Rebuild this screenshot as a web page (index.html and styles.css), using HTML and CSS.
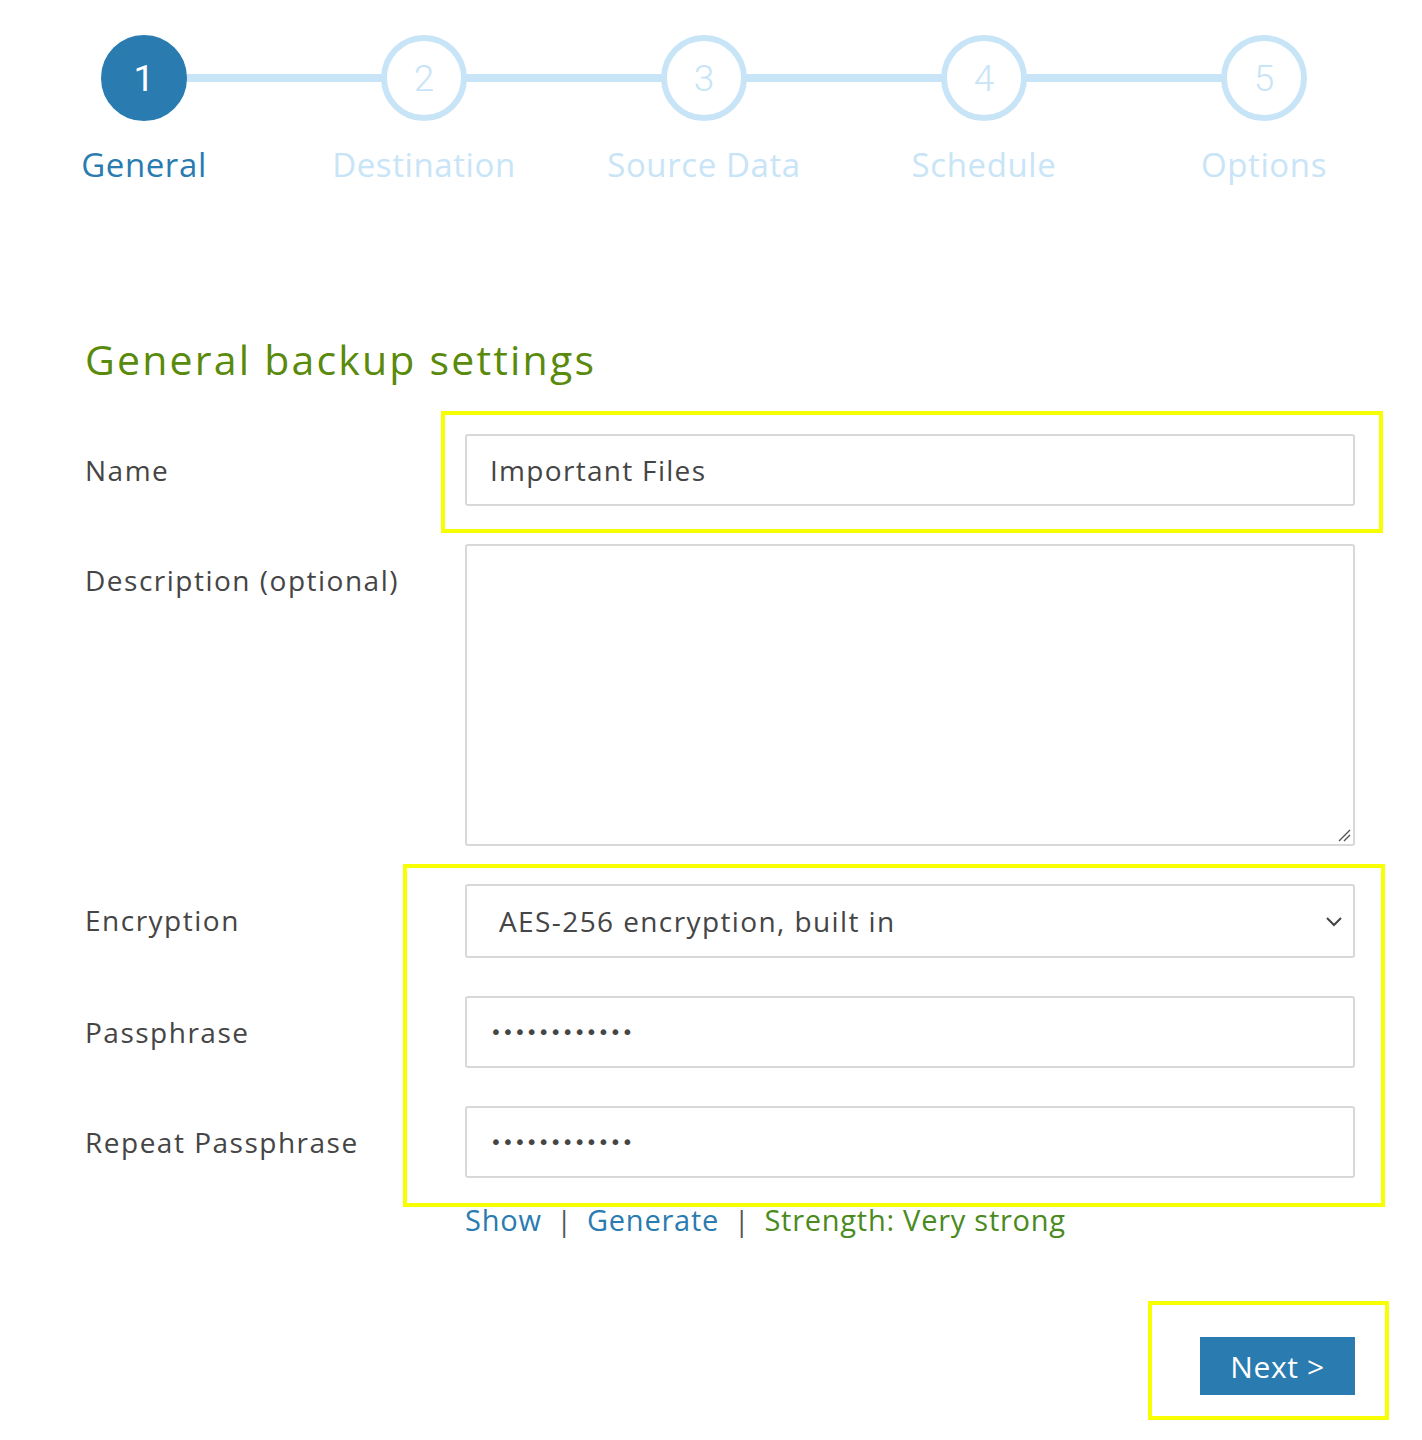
FILE: index.html
```html
<!DOCTYPE html>
<html lang="en">
<head>
<meta charset="utf-8">
<title>Add backup - General</title>
<link rel="stylesheet" href="styles.css">
</head>
<body>
<div class="page">
  <ol class="steps">
    <li class="step active"><span class="circle">1</span><span class="step-label">General</span></li>
    <li class="step"><span class="circle">2</span><span class="step-label">Destination</span></li>
    <li class="step"><span class="circle">3</span><span class="step-label">Source Data</span></li>
    <li class="step"><span class="circle">4</span><span class="step-label">Schedule</span></li>
    <li class="step last"><span class="circle">5</span><span class="step-label">Options</span></li>
  </ol>

  <main class="content">
    <h1 class="title">General backup settings</h1>

    <div class="form">
      <div class="row">
        <label class="label">Name</label>
        <div class="field"><div class="input">Important Files</div></div>
      </div>
      <div class="row">
        <label class="label">Description (optional)</label>
        <div class="field">
          <div class="input textarea">
            <svg class="grip" width="16" height="16" viewBox="0 0 16 16"><path d="M15 4 L4 15 M15 9 L9 15" stroke="#555" stroke-width="1.4" fill="none"/></svg>
          </div>
        </div>
      </div>
      <div class="row">
        <label class="label">Encryption</label>
        <div class="field">
          <div class="input select">
            <span>AES-256 encryption, built in</span>
            <svg class="chev" width="18" height="12" viewBox="0 0 18 12"><path d="M2 3 L9 10 L16 3" stroke="#444" stroke-width="2" fill="none"/></svg>
          </div>
        </div>
      </div>
      <div class="row">
        <label class="label">Passphrase</label>
        <div class="field"><div class="input pass">••••••••••••</div></div>
      </div>
      <div class="row">
        <label class="label">Repeat Passphrase</label>
        <div class="field"><div class="input pass">••••••••••••</div></div>
      </div>
      <div class="row links-row">
        <span></span>
        <div class="links">
          <a class="link">Show</a><span class="sep">|</span><a class="link">Generate</a><span class="sep">|</span><span class="strength">Strength: Very strong</span>
        </div>
      </div>
    </div>

    <div class="actions">
      <button class="next">Next &gt;</button>
    </div>
  </main>

  <div class="mark mark-name"></div>
  <div class="mark mark-enc"></div>
  <div class="mark mark-next"></div>
</div>
</body>
</html>
```

FILE: styles.css
```css
* { box-sizing: border-box; }
html, body { margin: 0; padding: 0; background: #fff; }
body {
  font-family: "Open Sans", "Noto Sans", "Liberation Sans", sans-serif;
  color: #444;
  width: 1422px;
  min-height: 1440px;
}
.page { position: relative; width: 1422px; min-height: 1440px; }

/* Stepper */
.steps {
  list-style: none;
  margin: 0;
  padding: 35px 0 0 4px;
  display: flex;
}
.step {
  position: relative;
  width: 280px;
  display: flex;
  flex-direction: column;
  align-items: center;
}
.step::after {
  content: "";
  position: absolute;
  left: 50%;
  width: 280px;
  top: 39px;
  height: 8px;
  background: #c8e4f7;
  z-index: 0;
}
.step.last::after { display: none; }
.circle {
  position: relative;
  z-index: 1;
  width: 86px;
  height: 86px;
  border-radius: 50%;
  border: 6px solid #c8e4f7;
  background: #fff;
  color: #c8e4f7;
  font-family: Roboto, "Open Sans", sans-serif;
  font-weight: 300;
  font-size: 37px;
  display: flex;
  align-items: center;
  justify-content: center;
}
.step.active .circle {
  background: #2a7bb0;
  border-color: #2a7bb0;
  color: #fff;
  font-weight: 400;
}
.step-label {
  margin-top: 24px;
  font-size: 33px;
  line-height: 40px;
  letter-spacing: 0.6px;
  color: #c8e4f7;
  white-space: nowrap;
}
.step.active .step-label { color: #2a7bb0; }

/* Content */
.content {
  padding: 0 0 0 85px;
  width: 1355px;
}
.title {
  margin: 150px 0 51px;
  font-weight: 400;
  font-size: 41px;
  line-height: 48px;
  letter-spacing: 2.2px;
  color: #5a8a0c;
}
.form {
  display: flex;
  flex-direction: column;
  gap: 38px;
}
.row {
  display: grid;
  grid-template-columns: 380px 890px;
  align-items: start;
}
.label {
  font-size: 28px;
  line-height: 72px;
  letter-spacing: 1.5px;
  color: #454545;
}
.input {
  position: relative;
  height: 72px;
  border: 2px solid #d8d8d8;
  border-radius: 3px;
  background: #fff;
  font-size: 28px;
  line-height: 68px;
  letter-spacing: 1.3px;
  padding: 0 23px;
  color: #454545;
}
.textarea { height: 302px; }
.grip { position: absolute; right: 2px; bottom: 2px; }
.select {
  height: 74px;
  line-height: 70px;
  letter-spacing: 1.4px;
  padding: 0 32px;
  display: flex;
  justify-content: space-between;
  align-items: center;
}
.chev { margin-right: -22px; }
.pass {
  font-family: "DejaVu Sans", sans-serif;
  font-size: 20px;
  letter-spacing: 0.15px;
  padding-left: 23px;
}
.links-row { margin-top: -14px; }
.links {
  font-size: 29px;
  line-height: 36px;
  letter-spacing: 0.75px;
  white-space: nowrap;
}
.link { color: #2a7bb0; }
.sep { color: #555; margin: 0 15px; font-size: 28px; letter-spacing: 0; }
.strength { color: #4a8a1e; }

.actions {
  display: flex;
  justify-content: flex-end;
  margin-top: 99px;
}
.next {
  width: 155px;
  height: 58px;
  border: 0;
  border-radius: 0;
  background: #2a7bb0;
  color: #fff;
  font-family: inherit;
  font-size: 30px;
  letter-spacing: 0.6px;
  padding: 0;
}

/* Annotation highlight boxes */
.mark {
  position: absolute;
  border: 4px solid #f7ff00;
  pointer-events: none;
}
.mark-name { left: 441px; top: 411px; width: 942px; height: 122px; }
.mark-enc { left: 403px; top: 864px; width: 982px; height: 343px; }
.mark-next { left: 1148px; top: 1301px; width: 241px; height: 119px; }
```
